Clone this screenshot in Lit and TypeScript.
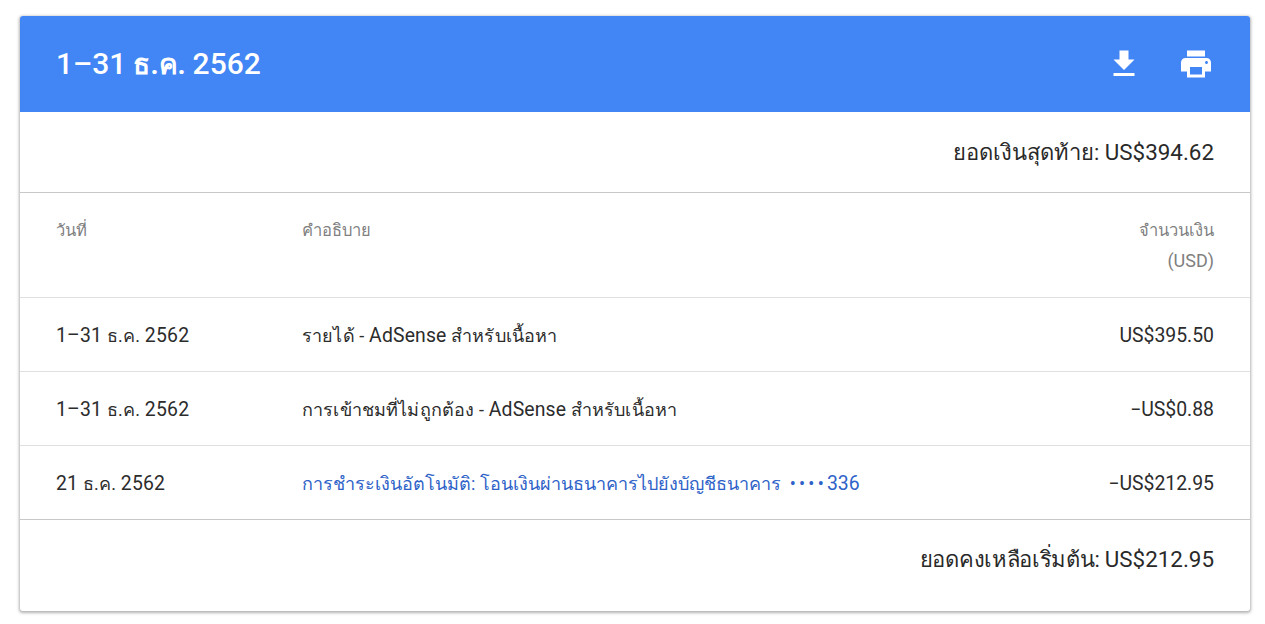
import { LitElement, html, css } from "lit";
import { customElement } from "lit/decorators.js";

interface Row { date: string; desc: string; amount: string; link?: boolean; }

const ROWS: Row[] = [
  { date: "1–31 ธ.ค. 2562", desc: "รายได้ - AdSense สำหรับเนื้อหา", amount: "US$395.50" },
  { date: "1–31 ธ.ค. 2562", desc: "การเข้าชมที่ไม่ถูกต้อง - AdSense สำหรับเนื้อหา", amount: "−US$0.88" },
  { date: "21 ธ.ค. 2562", desc: "การชำระเงินอัตโนมัติ: โอนเงินผ่านธนาคารไปยังบัญชีธนาคาร", amount: "−US$212.95", link: true },
];

/** Wraps Latin and digit runs: the reference sets them larger than the Thai text. */
const runs = (text: string) =>
  text.split(/([A-Za-z0-9$.()−–]{2,})/).map((part, i) => (i % 2 ? html`<span class="l">${part}</span>` : part));

@customElement("app-root")
export class AppRoot extends LitElement {
  static styles = css`
    :host { display: block; font-family: Roboto, "Noto Sans", sans-serif; color: #212121; padding: 16px 15px 13px 20px; background: #fff; }
    .card { background: #fff; border-radius: 3px; box-shadow: 0 1px 3px 1px rgba(0,0,0,.3); overflow: hidden; }
    .head { height: 96px; background: #4285f4; color: #fff; display: flex; align-items: center; padding: 0 36px; justify-content: space-between; }
    .title { font-size: 28px; font-weight: 700; line-height: 36px; }
    .title .l { font-size: 30px; font-weight: 500; }
    .icons { display: flex; gap: 36px; align-items: center; }
    .icons svg { display: block; fill: #fff; }
    .sum { display: flex; align-items: baseline; justify-content: flex-end; padding: 0 36px; font-size: 22px; line-height: 80px; color: #292929; }
    .sum .l { font-size: 22.4px; }
    .top { height: 80px; border-bottom: 1px solid #c8c8c8; }
    .bottom { height: 91px; line-height: 79px; letter-spacing: -.3px; }
    .bottom .l { letter-spacing: 0; }
    .row { display: grid; grid-template-columns: 246px 1fr 200px; padding: 3px 36px 0; box-sizing: border-box; height: 74px; align-items: center; border-bottom: 1px solid #e0e0e0; font-size: 18px; line-height: 24px; color: #2c2c2c; }
    .row .l { font-size: 19.4px; }
    .row.last { border-bottom-color: #c8c8c8; }
    .date { letter-spacing: .2px; }
    .desc { letter-spacing: .15px; }
    .amt { text-align: right; }
    .th { align-items: start; color: #808080; font-size: 16.5px; line-height: 30px; padding-top: 23px; height: 105px; }
    .th .l { font-size: 18px; vertical-align: 1px; }
    .link { color: #2e62c8; display: flex; align-items: baseline; letter-spacing: 0; }
    .acct { margin-left: 9px; font-size: 19.4px; }
    .dots { letter-spacing: 3.2px; font-size: 18px; }
  `;
  render() {
    return html`<div class="card">
      <div class="head">
        <div class="title">${runs("1–31 ธ.ค. 2562")}</div>
        <div class="icons">
          <svg width="36" height="36" viewBox="0 0 24 24"><path d="M19 9h-4V3H9v6H5l7 7 7-7zM5 18v2h14v-2H5z"/></svg>
          <svg width="36" height="36" viewBox="0 0 24 24"><path d="M19 8H5c-1.66 0-3 1.34-3 3v6h4v4h12v-4h4v-6c0-1.66-1.34-3-3-3zm-3 11H8v-5h8v5zm3-7c-.55 0-1-.45-1-1s.45-1 1-1 1 .45 1 1-.45 1-1 1zm-1-9H6v4h12V3z"/></svg>
        </div>
      </div>
      <div class="sum top">ยอดเงินสุดท้าย:&nbsp;${runs("US$394.62")}</div>
      <div class="row th"><div>วันที่</div><div>คำอธิบาย</div><div class="amt">จำนวนเงิน<br />${runs("(USD)")}</div></div>
      ${ROWS.map((r, i) => html`<div class="row ${i === ROWS.length - 1 ? "last" : ""}">
        <div class="date">${runs(r.date)}</div>
        <div class="${r.link ? "link" : "desc"}">
          <span>${runs(r.desc)}</span>
          ${r.link ? html`<span class="acct"><span class="dots">••••</span>336</span>` : ""}
        </div>
        <div class="amt">${runs(r.amount)}</div>
      </div>`)}
      <div class="sum bottom">ยอดคงเหลือเริ่มต้น:&nbsp;${runs("US$212.95")}</div>
    </div>`;
  }
}
